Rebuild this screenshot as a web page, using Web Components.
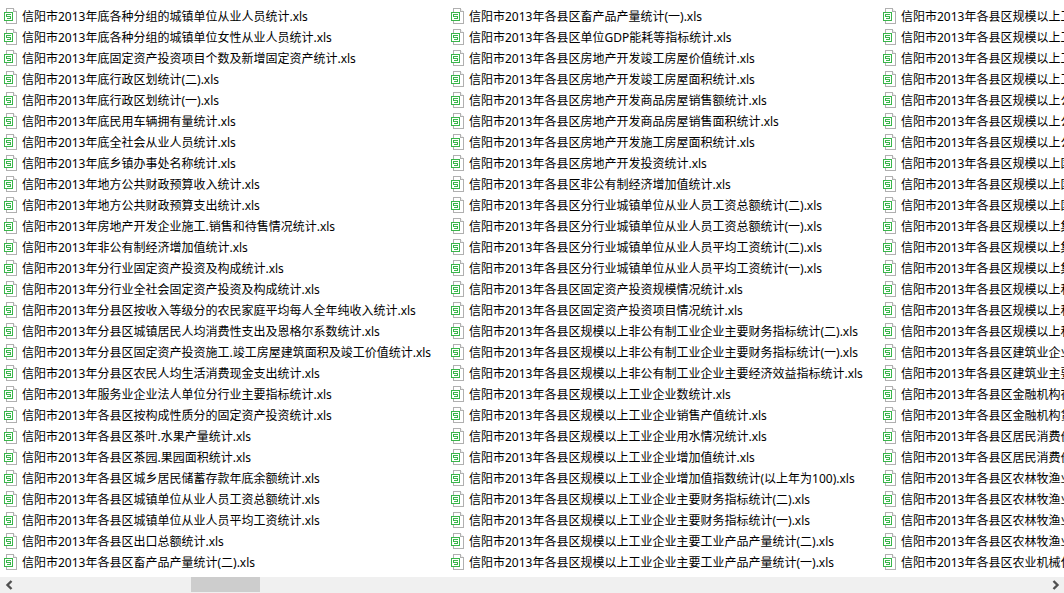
<!DOCTYPE html>
<html lang="zh-CN"><head><meta charset="utf-8"><title>文件列表</title>
<style>
html,body{margin:0;height:100%;overflow:hidden;background:#fff}
body{font:12px/21px "Noto Sans","Noto Sans CJK SC",sans-serif;color:#000}
</style></head><body>
<explorer-view></explorer-view>
<script>
const P='信阳市2013年', G=P+'各县区';
const files=[
['底各种分组的城镇单位从业人员统计','底各种分组的城镇单位女性从业人员统计','底固定资产投资项目个数及新增固定资产统计','底行政区划统计(二)','底行政区划统计(一)','底民用车辆拥有量统计','底全社会从业人员统计','底乡镇办事处名称统计','地方公共财政预算收入统计','地方公共财政预算支出统计','房地产开发企业施工.销售和待售情况统计','非公有制经济增加值统计','分行业固定资产投资及构成统计','分行业全社会固定资产投资及构成统计','分县区按收入等级分的农民家庭平均每人全年纯收入统计','分县区城镇居民人均消费性支出及恩格尔系数统计','分县区固定资产投资施工.竣工房屋建筑面积及竣工价值统计','分县区农民人均生活消费现金支出统计','服务业企业法人单位分行业主要指标统计','各县区按构成性质分的固定资产投资统计','各县区茶叶.水果产量统计','各县区茶园.果园面积统计','各县区城乡居民储蓄存款年底余额统计','各县区城镇单位从业人员工资总额统计','各县区城镇单位从业人员平均工资统计','各县区出口总额统计','各县区畜产品产量统计(二)'].map(s=>P+s),
['畜产品产量统计(一)','单位GDP能耗等指标统计','房地产开发竣工房屋价值统计','房地产开发竣工房屋面积统计','房地产开发商品房屋销售额统计','房地产开发商品房屋销售面积统计','房地产开发施工房屋面积统计','房地产开发投资统计','非公有制经济增加值统计','分行业城镇单位从业人员工资总额统计(二)','分行业城镇单位从业人员工资总额统计(一)','分行业城镇单位从业人员平均工资统计(二)','分行业城镇单位从业人员平均工资统计(一)','固定资产投资规模情况统计','固定资产投资项目情况统计','规模以上非公有制工业企业主要财务指标统计(二)','规模以上非公有制工业企业主要财务指标统计(一)','规模以上非公有制工业企业主要经济效益指标统计','规模以上工业企业数统计','规模以上工业企业销售产值统计','规模以上工业企业用水情况统计','规模以上工业企业增加值统计','规模以上工业企业增加值指数统计(以上年为100)','规模以上工业企业主要财务指标统计(二)','规模以上工业企业主要财务指标统计(一)','规模以上工业企业主要工业产品产量统计(二)','规模以上工业企业主要工业产品产量统计(一)'].map(s=>G+s),
['规模以上工业企业统计','规模以上工业企业统计','规模以上工业企业统计','规模以上工业企业统计','规模以上公有制企业统计','规模以上公有制企业统计','规模以上公有制企业统计','规模以上国有企业统计','规模以上国有企业统计','规模以上国有企业统计','规模以上集体企业统计','规模以上集体企业统计','规模以上集体企业统计','规模以上私营企业统计','规模以上私营企业统计','规模以上私营企业统计','建筑业企业统计','建筑业主要指标统计','金融机构存款统计','金融机构贷款统计','居民消费价格统计','居民消费价格统计','农林牧渔业统计','农林牧渔业统计','农林牧渔业统计','农林牧渔业统计','农业机械化统计'].map(s=>G+s)
];
class XlsIcon extends HTMLElement{constructor(){super();this.attachShadow({mode:'open'}).innerHTML=`<style>:host{display:block;width:16px;height:16px;flex:none;margin-top:-1px}svg{display:block}</style>
<svg width="16" height="16" viewBox="0 0 16 16" fill="none" shape-rendering="crispEdges">
<path d="M3.5 .5H10.5L13.5 3.5V15.5H3.5Z" fill="#fff" stroke="#b0b0b0"/>
<path d="M10.5 .5V3.5H13.5" fill="#ececec" stroke="#b0b0b0"/>
<rect x="1.5" y="4.5" width="8" height="8" fill="#fff" stroke="#39b54a"/>
<path d="M7.5 6.5H3.5V8.5H7.5V10.5H3.5" stroke="#39b54a"/></svg>`}}
customElements.define('xls-icon',XlsIcon);
class FileItem extends HTMLElement{constructor(){super();this.attachShadow({mode:'open'}).innerHTML=`<style>:host{display:flex;align-items:center;height:21px;min-width:0;white-space:nowrap;overflow:hidden}
.t{margin-left:3px}</style><xls-icon></xls-icon><span class="t"><slot></slot></span>`}}
customElements.define('file-item',FileItem);
class FileList extends HTMLElement{constructor(){super();this.attachShadow({mode:'open'}).innerHTML=`<style>:host{display:grid;flex:1;min-height:0;overflow:hidden;box-sizing:border-box;padding:6px 0 0 3px;
grid-template-rows:repeat(27,21px);grid-auto-flow:column;grid-template-columns:447px 432px 1fr;align-content:start}</style><slot></slot>`}}
customElements.define('file-list',FileList);
class HScrollbar extends HTMLElement{constructor(){super();this.attachShadow({mode:'open'}).innerHTML=`<style>:host{display:flex;align-items:flex-start;height:16px;background:#f0f0f0;flex:none}
.b{width:17px;height:16px;flex:none;display:flex;align-items:center;justify-content:center}
.tr{flex:1;height:16px}.th{width:69px;height:15px;margin-left:174px;background:#cdcdcd}
path{fill:none;stroke:#505050;stroke-width:2.4}</style>
<div class="b"><svg width="8" height="10" viewBox="0 0 8 10"><path d="M6.5 1L2.5 5L6.5 9"/></svg></div><div class="tr"><div class="th"></div></div>
<div class="b"><svg width="8" height="10" viewBox="0 0 8 10"><path d="M1.5 1L5.5 5L1.5 9"/></svg></div>`}}
customElements.define('h-scrollbar',HScrollbar);
class ExplorerView extends HTMLElement{constructor(){super();const r=this.attachShadow({mode:'open'});r.innerHTML=`<style>:host{display:flex;flex-direction:column;width:1064px;height:593px;overflow:hidden}</style><file-list></file-list><h-scrollbar></h-scrollbar>`;
const l=r.querySelector('file-list');files.flat().forEach(n=>{const f=document.createElement('file-item');f.textContent=n+'.xls';l.appendChild(f)})}}
customElements.define('explorer-view',ExplorerView);
</script></body></html>
